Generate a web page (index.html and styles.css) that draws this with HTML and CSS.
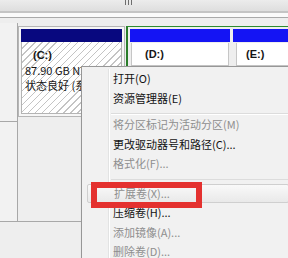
FILE: index.html
```html
<!DOCTYPE html>
<html>
<head>
<meta charset="utf-8">
<link rel="stylesheet" href="styles.css">
</head>
<body>
<div class="hscroll"><span class="grip"></span></div>
<div class="rule"></div>
<div class="disk">
  <div class="label"></div>
  <div class="parts">
    <div class="part part-c">
      <div class="bar bar-navy"></div>
      <div class="body hatch">
        <div class="clip">
          <div class="name name-c">(C:)</div>
          <div class="line">87.90 GB NTFS</div>
          <div class="line">状态良好 (系统, 启动)</div>
        </div>
      </div>
    </div>
    <div class="part part-d">
      <div class="bar bar-blue"></div>
      <div class="body plain"><div class="name name-d">(D:)</div></div>
    </div>
    <div class="part part-e">
      <div class="bar bar-blue"></div>
      <div class="body plain"><div class="name name-e">(E:)</div></div>
    </div>
  </div>
</div>
<div class="disk2">
  <div class="label2"></div>
</div>

<div class="menu">
  <div class="gutter"></div>
  <div class="item">打开(O)</div>
  <div class="item">资源管理器(E)</div>
  <div class="sep sep1"></div>
  <div class="item off">将分区标记为活动分区(M)</div>
  <div class="item">更改驱动器号和路径(C)...</div>
  <div class="item off">格式化(F)...</div>
  <div class="sep sep2"></div>
  <div class="item off hot">扩展卷(X)...</div>
  <div class="item">压缩卷(H)...</div>
  <div class="item off">添加镜像(A)...</div>
  <div class="item off">删除卷(D)...</div>
</div>
<div class="redbox"></div>
</body>
</html>
```

FILE: styles.css
```css
* { box-sizing: border-box; }
html, body { margin: 0; padding: 0; }
body {
  width: 288px;
  height: 258px;
  overflow: hidden;
  position: relative;
  background: #eeeeee;
  font-family: "Noto Sans CJK SC", "Microsoft YaHei", sans-serif;
  font-size: 11px;
  color: #151515;
}
.hscroll {
  height: 11px;
  background: linear-gradient(#ececec, #dedede);
  padding-left: 125px;
}
.grip {
  display: block;
  width: 7px;
  height: 5px;
  background: repeating-linear-gradient(90deg, #6e6e6e 0 1px, transparent 1px 3px);
}
.rule {
  height: 7px;
  border-top: 2px solid #c4c4c4;
  border-bottom: 1px solid #a9a9a9;
  background: #fafafa;
}
.disk {
  display: flex;
  margin-top: 5px;
  height: 99px;
}
.label {
  width: 18px;
  flex: none;
  background: #f2f2f2;
  border-right: 1px solid #a8a8a8;
  border-bottom: 1px solid #a8a8a8;
}
.parts {
  display: flex;
  padding-top: 3px;
  flex: 1;
  overflow: hidden;
}
.part {
  display: flex;
  flex-direction: column;
  flex: none;
}
.part-c {
  width: 107px;
  height: 91px;
  border: 1px solid #b6b6b6;
  padding: 2px;
  background: #f6f6f6;
}
.part-d {
  margin-left: 1px;
  width: 104px;
  height: 91px;
  border-top: 1px solid #2e8b2e;
  border-left: 2px solid #2a7d2a;
  padding: 2px 0 0 2px;
}
.part-e {
  width: 60px;
  height: 91px;
  border-top: 1px solid #2e8b2e;
  padding: 2px 0 0 3px;
}
.bar { height: 13px; flex: none; }
.bar-navy { background: #08087f; }
.bar-blue { background: #1414f4; }
.body { flex: 1; }
.hatch {
  border: 1px solid #b4b4b4;
  border-top: none;
  background: repeating-linear-gradient(135deg, #ffffff 0 4px, #c4c4c4 4px 5px);
  padding: 6px 0 0 3px;
  white-space: nowrap;
  line-height: 15px;
}
.clip {
  width: 56px;
  overflow: hidden;
}
.plain {
  margin: 1px 1px 0 1px;
  flex: none;
  height: 23px;
  background: #ffffff;
  border: 1px solid #c6c6c6;
  border-top: none;
  padding-top: 4px;
  line-height: 15px;
}
.part-e .plain { margin-left: 3px; margin-right: 0; }
.name { font-family: "Liberation Sans", "Noto Sans CJK SC", sans-serif; font-weight: bold; font-size: 11px; }
.name-c { padding-left: 8px; }
.name-d { padding-left: 13px; }
.name-e { padding-left: 9px; }
.line { font-size: 11px; }
.disk2 {
  display: flex;
  height: 100px;
}
.label2 {
  width: 82px;
  border-bottom: 1px solid #a8a8a8;
  background: linear-gradient(90deg, #f2f2f2 0 17px, #a8a8a8 17px 18px, #eeeeee 18px);
}

.menu {
  position: absolute;
  left: 81px;
  top: 66px;
  width: 212px;
  height: 200px;
  background: #f1f1f1;
  border: 1px solid #979797;
  padding-top: 2px;
  box-shadow: 2px 2px 3px rgba(0,0,0,0.25);
}
.gutter {
  position: absolute;
  left: 26px;
  top: 2px;
  bottom: 0;
  width: 2px;
  border-left: 1px solid #e2e3e3;
  border-right: 1px solid #ffffff;
}
.item {
  position: relative;
  height: 19.5px;
  line-height: 19.5px;
  padding-left: 31px;
  margin: 0 3px 0 0;
  white-space: nowrap;
  color: #121212;
}
.item.off { color: #8e8e8e; }
.item.hot {
  margin-left: 5px;
  padding-left: 26px;
  background: linear-gradient(#f9f9f9, #e9e9e9);
  border: 1px solid #cfcfcf;
  border-radius: 2px;
  line-height: 17.5px;
}
.sep {
  position: relative;
  margin-left: 29px;
  border-bottom: 1px solid #ffffff;
}
.sep::before {
  content: "";
  display: block;
  border-top: 1px solid #dcdcdc;
}
.sep1 { height: 7px; padding-top: 5px; }
.sep2 { height: 10px; padding-top: 5px; border-bottom: none; }
.redbox {
  position: absolute;
  left: 91px;
  top: 182px;
  width: 111px;
  height: 26px;
  border: 6px solid #e4312f;
}
```
